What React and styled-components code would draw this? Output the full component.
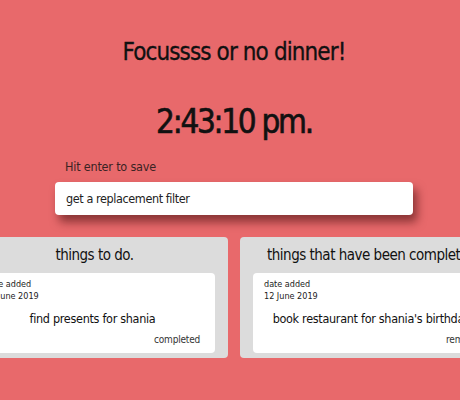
import React from 'react'
import styled, { createGlobalStyle } from 'styled-components'

const GlobalStyle = createGlobalStyle`
    html, body {
        margin: 0;
        padding: 0;
        background: #e8696b;
        overflow: hidden;
    }
    body {
        font-family: "DejaVu Sans Condensed", "DejaVu Sans", sans-serif;
        color: #111;
    }
`

const todos = [{ date: '12 June 2019', text: 'find presents for shania', action: 'completed' }]
const done = [{ date: '12 June 2019', text: "book restaurant for shania's birthday", action: 'remove' }]

const App = () => {
    return (
        <>
            <GlobalStyle />
            <Page>
                <Title>Focussss or no dinner!</Title>
                <Clock>2:43:10 pm.</Clock>
                <Form>
                    <Label>Hit enter to save</Label>
                    <Input defaultValue="get a replacement filter" />
                </Form>
                <Lists>
                    <Panel>
                        <PanelTitle>things to do.</PanelTitle>
                        {todos.map((t, i) => (
                            <Card key={i}>
                                <Meta>date added</Meta>
                                <Meta>{t.date}</Meta>
                                <CardText>{t.text}</CardText>
                                <Action>{t.action}</Action>
                            </Card>
                        ))}
                    </Panel>
                    <Panel>
                        <PanelTitle>things that have been completed.</PanelTitle>
                        {done.map((t, i) => (
                            <Card key={i}>
                                <Meta>date added</Meta>
                                <Meta>{t.date}</Meta>
                                <CardText>{t.text}</CardText>
                                <Action>{t.action}</Action>
                            </Card>
                        ))}
                    </Panel>
                </Lists>
            </Page>
        </>
    )
}

export default App

const Page = styled.div`
    width: 452px;
    padding-left: 8px;
    height: 400px;
    display: flex;
    flex-direction: column;
    align-items: center;
`
const Title = styled.h1`
    font-weight: 400;
    font-size: 24px;
    letter-spacing: -0.9px;
    -webkit-text-stroke: 0.3px #111;
    margin: 38px 0 0;
    line-height: 28px;
`
const Clock = styled.h2`
    font-weight: 400;
    font-size: 33px;
    letter-spacing: -2.3px;
    -webkit-text-stroke: 0.6px #111;
    margin: 36px 0 0;
    line-height: 40px;
`
const Form = styled.div`
    width: 358px;
    margin-top: 16px;
    display: flex;
    flex-direction: column;
`
const Label = styled.label`
    font-size: 12.5px;
    letter-spacing: -0.2px;
    color: #3a2323;
    padding-left: 10px;
    line-height: 18px;
`
const Input = styled.input`
    margin-top: 6px;
    height: 33px;
    box-sizing: border-box;
    border: none;
    border-radius: 4px;
    background: #fff;
    padding: 0 11px;
    font-family: inherit;
    font-size: 12.5px;
    letter-spacing: -0.4px;
    color: #222;
    box-shadow: 4px 7px 10px rgba(60, 10, 10, 0.55);
    outline: none;
`
const Lists = styled.div`
    width: 100%;
    margin-top: 22px;
    display: flex;
    justify-content: center;
    gap: 12px;
`
const Panel = styled.div`
    flex: 0 0 267px;
    box-sizing: border-box;
    background: #dcdcdc;
    border-radius: 4px;
    padding: 0 13px 5px 13px;
`
const PanelTitle = styled.div`
    text-align: center;
    font-size: 15px;
    letter-spacing: -0.5px;
    line-height: 36px;
    white-space: nowrap;
`
const Card = styled.div`
    background: #fff;
    border-radius: 4px;
    padding: 5px 15px 6px 11px;
`
const Meta = styled.div`
    font-size: 9px;
    line-height: 12px;
    color: #222;
`
const CardText = styled.div`
    text-align: center;
    font-size: 12.5px;
    letter-spacing: -0.3px;
    line-height: 18px;
    margin-top: 8px;
    white-space: nowrap;
`
const Action = styled.div`
    text-align: right;
    font-size: 10px;
    letter-spacing: -0.2px;
    color: #333;
    line-height: 14px;
    margin-top: 5px;
`
